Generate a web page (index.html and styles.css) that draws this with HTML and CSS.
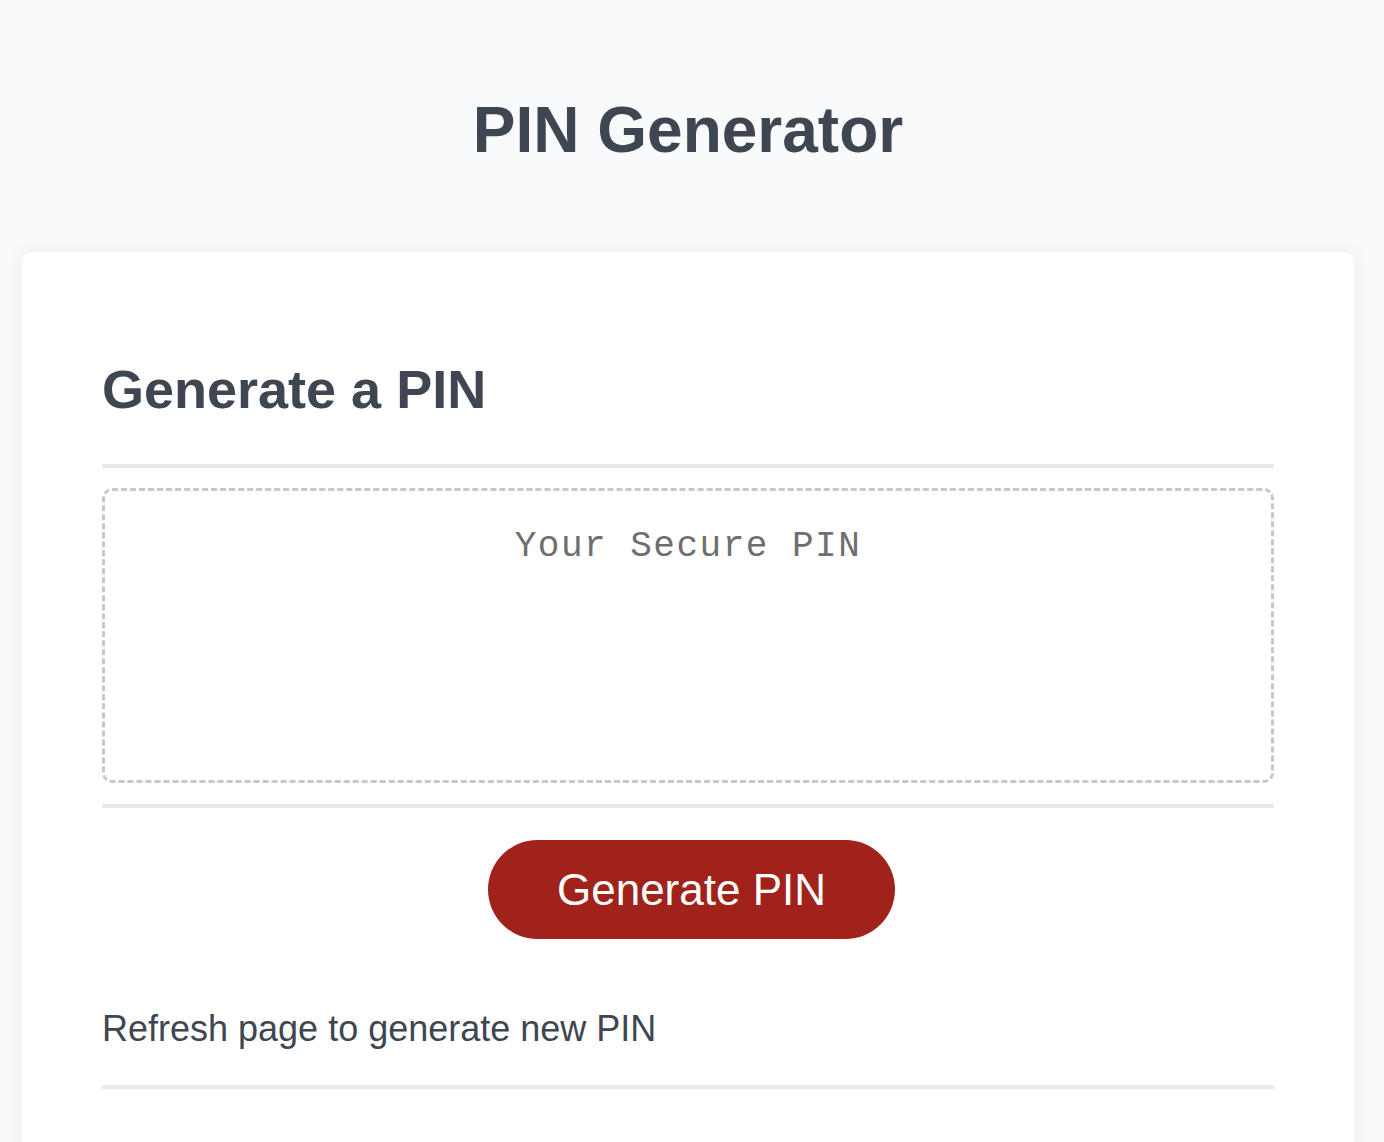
FILE: index.html
```html
<!DOCTYPE html>
<html lang="en">
<head>
<meta charset="utf-8">
<title>PIN Generator</title>
<link rel="stylesheet" href="styles.css">
</head>
<body>
<header class="page-header">
  <h1 class="page-title">PIN Generator</h1>
</header>
<main class="card">
  <h2 class="card-title">Generate a PIN</h2>
  <hr class="divider">
  <div class="pin-box">
    <p class="pin-label">Your Secure PIN</p>
  </div>
  <hr class="divider">
  <div class="actions">
    <button class="btn-generate" type="button">Generate PIN</button>
  </div>
  <p class="hint">Refresh page to generate new PIN</p>
  <hr class="divider">
</main>
</body>
</html>
```

FILE: styles.css
```css
* { box-sizing: border-box; }
html, body { margin: 0; padding: 0; }
body {
  background: #f9fafb;
  font-family: "Liberation Sans", Arial, Helvetica, sans-serif;
  color: #3d4651;
  min-height: 1142px;
}
.page-header {
  padding-top: 92px;
  height: 252px;
  margin: 0 30px 0 22px;
}
.page-title {
  margin: 0;
  font-size: 64px;
  line-height: 1.2;
  font-weight: 700;
  text-align: center;
  color: #3d4651;
}
.card {
  margin: 0 30px 0 22px;
  background: #ffffff;
  border-radius: 10px;
  box-shadow: 0 0 18px rgba(0, 0, 0, 0.07);
  padding: 105px 80px 120px;
}
.card-title {
  margin: 0;
  font-size: 54px;
  line-height: 1.2;
  font-weight: 700;
  color: #3d4651;
}
.divider {
  border: 0;
  height: 4px;
  background: #e9e9e9;
  margin: 0;
}
.card-title + .divider { margin-top: 42px; }
.pin-box {
  margin: 20px 0 21px;
  height: 295px;
  border: 3px dashed #c5c9cf;
  border-radius: 10px;
  padding-top: 34px;
}
.pin-label {
  margin: 0;
  text-align: center;
  font-family: "Liberation Mono", "Courier New", monospace;
  font-size: 36px;
  line-height: 1.2;
  letter-spacing: 1.5px;
  color: #6e6e6e;
}
.actions {
  display: flex;
  justify-content: center;
  margin-top: 32px;
}
.btn-generate {
  font-family: "Liberation Sans", Arial, Helvetica, sans-serif;
  font-size: 44px;
  line-height: 49px;
  padding: 25px 69px;
  border: 0;
  border-radius: 50px;
  background: #a0221a;
  color: #ffffff;
  margin-left: 7px;
}
.hint {
  margin: 68px 0 35px;
  font-size: 36px;
  line-height: 1.2;
  color: #3d4651;
}
```
